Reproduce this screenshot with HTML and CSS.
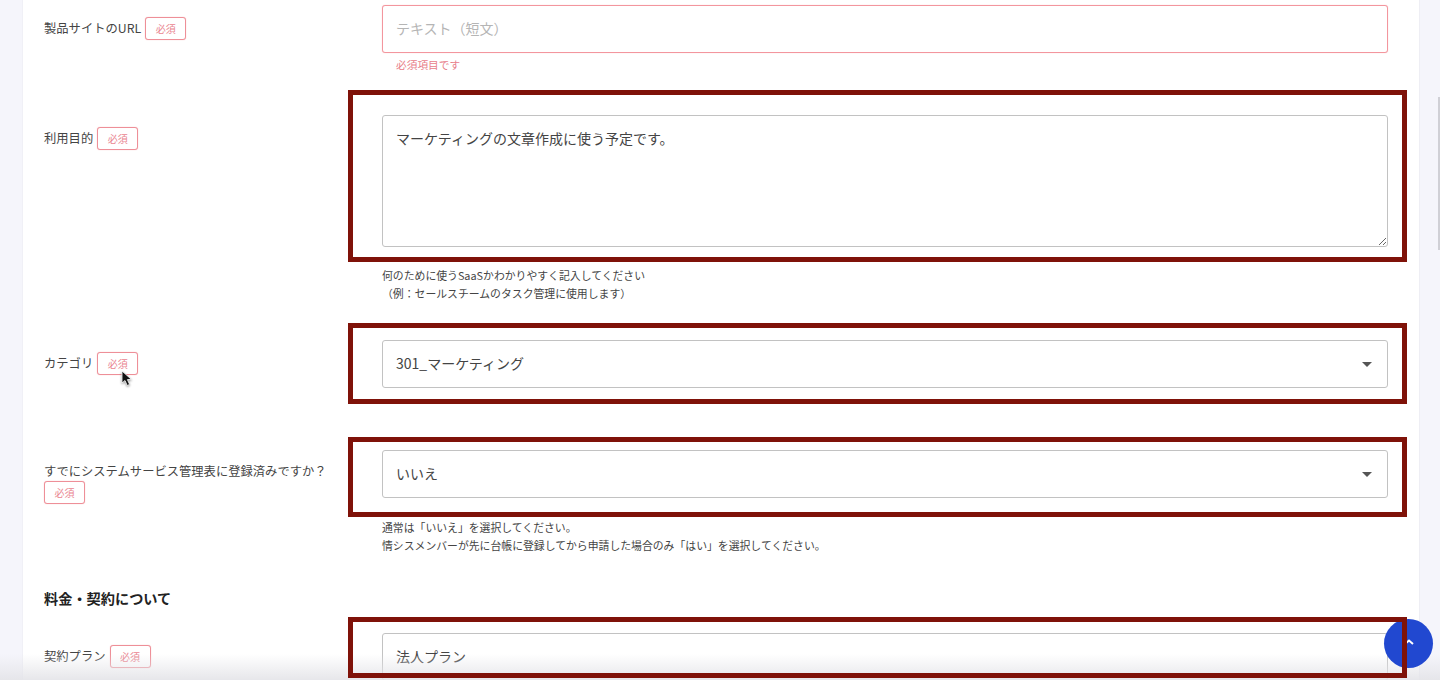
FILE: index.html
```html
<!DOCTYPE html>
<html lang="ja">
<head>
  <meta charset="UTF-8">
  <title>SaaS利用申請フォーム</title>
  <link rel="stylesheet" href="styles.css">
</head>
<body>
  <div class="page">
    <form class="card">
      <!-- 製品サイト -->
      <div class="form-row is-error">
        <div class="label">
          <span class="label-text">製品サイトのURL</span>
          <span class="badge">必須</span>
        </div>
        <div class="control">
          <div class="field">
            <input class="input input-error" type="text" placeholder="テキスト（短文）">
          </div>
          <p class="error">必須項目です</p>
        </div>
      </div>

      <!-- 利用目的 -->
      <div class="form-row">
        <div class="label">
          <span class="label-text">利用目的</span>
          <span class="badge">必須</span>
        </div>
        <div class="control">
          <div class="field">
            <textarea class="input textarea">マーケティングの文章作成に使う予定です。</textarea>
            <span class="mark mark-purpose"></span>
          </div>
          <p class="hint">何のために使うSaaSかわかりやすく記入してください<br>（例：セールスチームのタスク管理に使用します）</p>
        </div>
      </div>

      <!-- カテゴリ -->
      <div class="form-row is-plain">
        <div class="label">
          <span class="label-text">カテゴリ</span>
          <span class="badge">必須</span>
        </div>
        <div class="control">
          <div class="field">
            <select class="input select">
              <option>301_マーケティング</option>
            </select>
            <span class="caret"></span>
            <span class="mark mark-category"></span>
          </div>
        </div>
      </div>

      <!-- 登録済みかどうか -->
      <div class="form-row is-last-in-section">
        <div class="label">
          <span class="label-text">すでにシステムサービス管理表に登録済みですか？</span>
          <span class="badge">必須</span>
        </div>
        <div class="control">
          <div class="field">
            <select class="input select">
              <option>いいえ</option>
            </select>
            <span class="caret"></span>
            <span class="mark mark-registered"></span>
          </div>
          <p class="hint hint-registered">通常は「いいえ」を選択してください。<br>情シスメンバーが先に台帳に登録してから申請した場合のみ「はい」を選択してください。</p>
        </div>
      </div>

      <h2 class="section-title">料金・契約について</h2>

      <!-- 契約プラン -->
      <div class="form-row">
        <div class="label">
          <span class="label-text">契約プラン</span>
          <span class="badge">必須</span>
        </div>
        <div class="control">
          <div class="field">
            <input class="input" type="text" value="法人プラン">
            <span class="mark mark-plan"></span>
          </div>
        </div>
      </div>
    </form>

    <div class="scroll-thumb"></div>
    <div class="bottom-fade"></div>

    <button class="to-top" type="button" aria-label="ページ上部へ">
      <svg width="12" height="8" viewBox="0 0 12 8"><path d="M2 6 L6 2.5 L10 6" fill="none" stroke="#fff" stroke-width="2"/></svg>
    </button>

    <!-- Mouse pointer caught in the capture -->
    <svg class="pointer" width="13" height="17" viewBox="0 0 13 17">
      <path d="M1 1 L1 13 L4 10.5 L6.2 15.5 L8.6 14.4 L6.4 9.6 L10.4 9.4 Z" fill="#111" stroke="#fff" stroke-width="0.8"/>
    </svg>
  </div>
</body>
</html>
```

FILE: styles.css
```css
/* Basic styling */
* {
  box-sizing: border-box;
}
body {
  margin: 0;
  background: #f5f5fb;
  font-family: "Noto Sans CJK JP", "Noto Sans", sans-serif;
  color: #444;
}
.page {
  position: relative;
  height: 680px;
  overflow: hidden;
}
.card {
  margin-left: 22px;
  width: 1398px;
  height: 680px;
  padding: 5px 31px 0 21px;
  background: #fff;
  border-left: 1px solid #f0f0f6;
  border-right: 1px solid #eeeef4;
}

/* Form rows */
.form-row {
  display: grid;
  grid-template-columns: 338px 1006px;
  margin-bottom: 38px;
}
.form-row.is-error {
  margin-bottom: 41px;
}
.form-row.is-plain {
  margin-bottom: 62px;
}
.form-row.is-last-in-section {
  margin-bottom: 32px;
}
.label {
  display: flex;
  flex-wrap: wrap;
  align-items: center;
  align-content: flex-start;
  column-gap: 4px;
  padding: 12px 24px 0 0;
}
.label-text {
  font-size: 12.3px;
  line-height: 19px;
  color: #444;
}
.badge {
  display: flex;
  align-items: center;
  justify-content: center;
  width: 41px;
  height: 23px;
  border: 1px solid #ee8f98;
  border-radius: 3px;
  box-shadow: 0 0 1px #f4abb1;
  font-size: 10px;
  color: #ea8590;
  background: #fff;
}

/* Controls */
.field {
  position: relative;
}
.input {
  display: block;
  width: 100%;
  height: 48px;
  padding: 0 13px 2px;
  border: 1px solid #c2c2c2;
  border-radius: 3px;
  background: #fff;
  font-family: inherit;
  font-size: 14px;
  color: #444;
  outline: none;
}
.input::placeholder {
  color: #b5b5b5;
}
.input-error {
  border-color: #f3969e;
  box-shadow: 0 0 1px #f8b4b8;
}
.textarea {
  height: 132px;
  padding: 12px 13px;
  line-height: 20px;
}
.select {
  appearance: none;
}
.caret {
  position: absolute;
  top: 22px;
  right: 16px;
  border-left: 5px solid transparent;
  border-right: 5px solid transparent;
  border-top: 5px solid #555;
}
.error {
  margin: 3px 0 0 14px;
  font-size: 10.7px;
  line-height: 18px;
  color: #e8808a;
}
.hint {
  margin: 19px 0 0;
  font-size: 10.85px;
  line-height: 18px;
  color: #444;
}
.hint-registered {
  margin-top: 20px;
}
.section-title {
  margin: 0 0 23px;
  font-size: 14.2px;
  line-height: 24px;
  font-weight: 700;
  color: #222;
}

/* Red annotation frames drawn over the capture */
.mark {
  position: absolute;
  left: -34px;
  right: -19px;
  border: 5px solid #7f1209;
  pointer-events: none;
  z-index: 3;
}
.mark-purpose {
  top: -25px;
  bottom: -15px;
}
.mark-category {
  top: -17px;
  bottom: -16px;
}
.mark-registered {
  top: -13px;
  bottom: -19px;
}
.mark-plan {
  top: -16px;
  bottom: 3px;
}

/* Overlays */
.scroll-thumb {
  position: absolute;
  top: 97px;
  right: 0;
  width: 2px;
  height: 153px;
  background: #d0d0d6;
}
.bottom-fade {
  position: absolute;
  left: 0;
  right: 0;
  bottom: 0;
  height: 26px;
  background: linear-gradient(rgba(235,235,238,0), rgba(228,228,232,0.9));
  pointer-events: none;
}
.to-top {
  position: absolute;
  left: 1384px;
  top: 619px;
  display: flex;
  align-items: center;
  justify-content: center;
  width: 49px;
  height: 49px;
  padding: 0 0 4px;
  border: none;
  border-radius: 50%;
  background: #2148d0;
  z-index: 2;
}
.pointer {
  position: absolute;
  left: 121px;
  top: 370px;
  filter: drop-shadow(0 1px 1px rgba(0,0,0,0.4));
}
```
